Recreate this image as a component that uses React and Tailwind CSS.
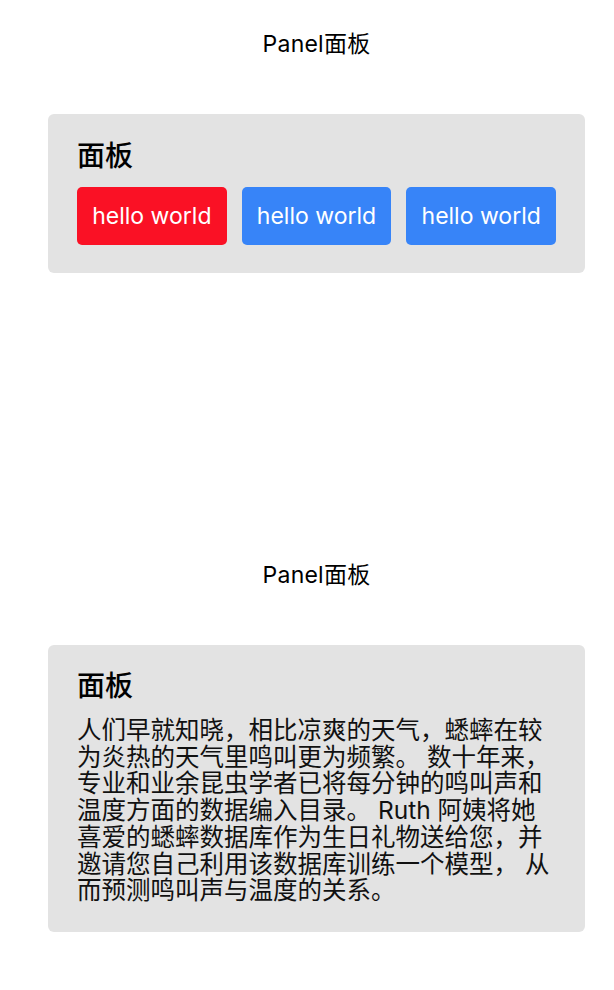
const FONT = "font-['Inter','Noto_Sans_CJK_SC',sans-serif]";

const TEXT =
  "人们早就知晓，相比凉爽的天气，蟋蟀在较为炎热的天气里鸣叫更为频繁。 数十年来，专业和业余昆虫学者已将每分钟的鸣叫声和温度方面的数据编入目录。 Ruth 阿姨将她喜爱的蟋蟀数据库作为生日礼物送给您，并邀请您自己利用该数据库训练一个模型， 从而预测鸣叫声与温度的关系。";

function Section({ children }) {
  return (
    <section className="ml-12 mr-[29px]">
      <p className="text-center text-[23px] leading-[30px] tracking-[0.01em] text-black">Panel面板</p>
      <div className="mt-[55px]">{children}</div>
    </section>
  );
}

function HelloButton({ color }) {
  return (
    <button className={`h-[58px] w-[151px] rounded-[5px] text-[23px] text-white ${color}`}>
      hello world
    </button>
  );
}

export default function App() {
  return (
    <div className={`${FONT} min-h-[990px] bg-white pt-[29px]`}>
      <Section>
        <div className="rounded-md bg-[#e3e3e3] px-[29px] pt-[25px] pb-[28px]">
          <h2 className="text-[28px] leading-[34px] font-medium text-black">面板</h2>
          <div className="mt-[14px] flex gap-[15px]">
            <HelloButton color="bg-[#fa1125]" />
            <HelloButton color="bg-[#3784f8]" />
            <HelloButton color="bg-[#3784f8]" />
          </div>
        </div>
      </Section>

      <div className="mt-[287px]">
        <Section>
          <div className="rounded-md bg-[#e3e3e3] pl-[29px] pr-[33px] pt-[24px] pb-[28px]">
            <h2 className="text-[28px] leading-[34px] font-medium text-black">面板</h2>
            <p className="mt-[14px] text-[24.5px] leading-[26.7px] text-[#111]">{TEXT}</p>
          </div>
        </Section>
      </div>
    </div>
  );
}
